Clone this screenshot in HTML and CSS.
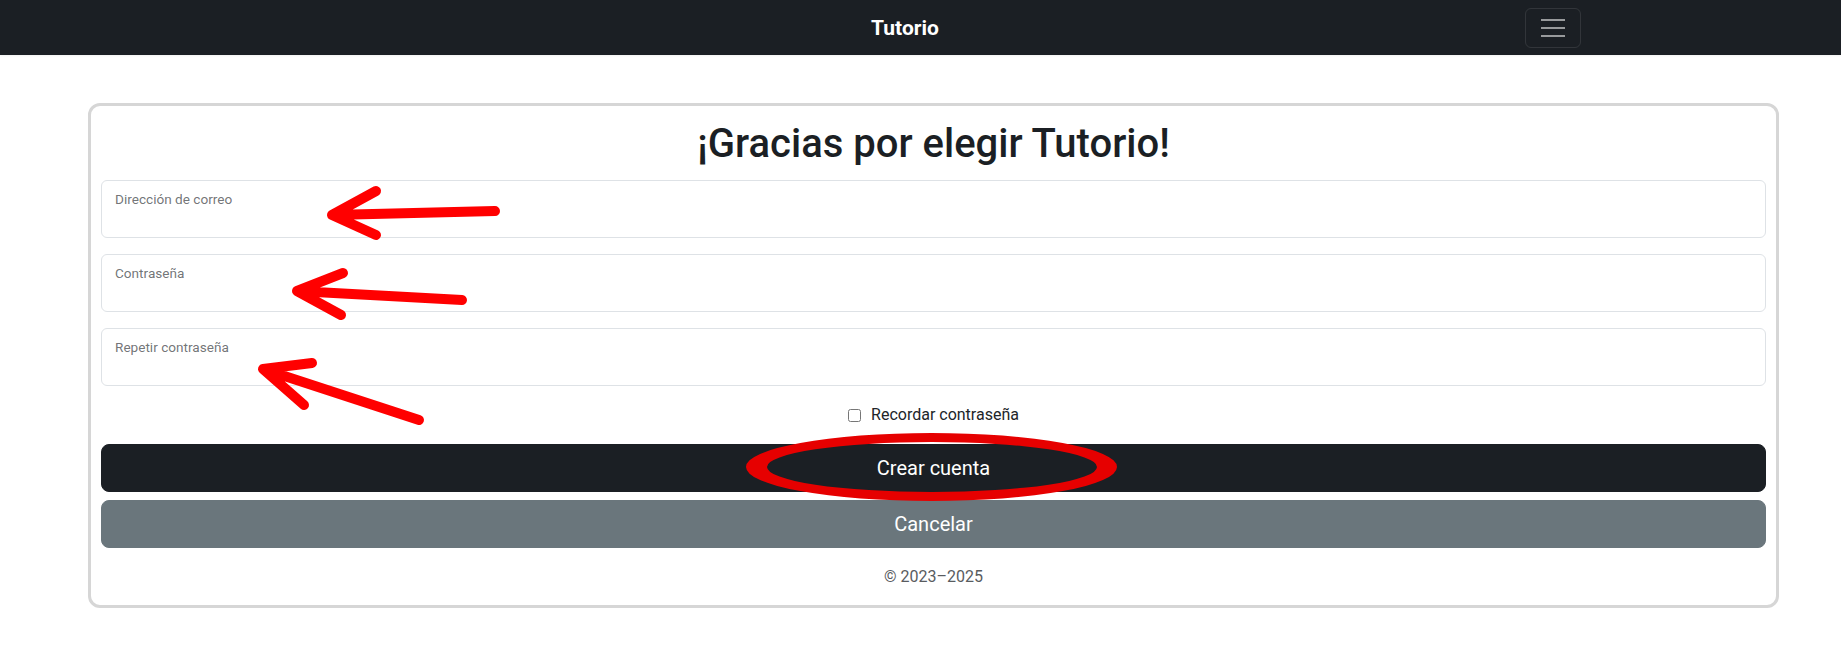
FILE: index.html
```html
<!DOCTYPE html>
<html lang="es">
<head>
<meta charset="utf-8">
<title>Tutorio</title>
<link rel="stylesheet" href="styles.css">
</head>
<body>
<nav class="navbar">
  <div class="nav-inner">
    <a class="brand" href="#">Tutorio</a>
    <button class="toggler" type="button" aria-label="Menú">
      <span class="bar"></span><span class="bar"></span><span class="bar"></span>
    </button>
  </div>
</nav>

<main class="card">
  <h1 class="title">¡Gracias por elegir Tutorio!</h1>
  <form class="form">
    <div class="field">
      <input class="input" type="email" id="email">
      <label class="label" for="email">Dirección de correo</label>
    </div>
    <div class="field">
      <input class="input" type="password" id="pass">
      <label class="label" for="pass">Contraseña</label>
    </div>
    <div class="field">
      <input class="input" type="password" id="pass2">
      <label class="label" for="pass2">Repetir contraseña</label>
    </div>
    <div class="check-row">
      <input class="check" type="checkbox" id="remember">
      <label for="remember">Recordar contraseña</label>
    </div>
    <button class="btn btn-dark" type="submit">Crear cuenta</button>
    <button class="btn btn-secondary" type="button">Cancelar</button>
  </form>
  <p class="footer">© 2023–2025</p>
</main>

<svg class="annotations" width="1841" height="663" viewBox="0 0 1841 663" aria-hidden="true">
  <g fill="none" stroke="#ff0000" stroke-width="10" stroke-linecap="round" stroke-linejoin="round">
    <path d="M495 211 L332 215 M376 191 L332 215 L376 235"/>
    <path d="M462 300 L297 291 M343 273 L297 291 L341 315"/>
    <path d="M419 420 L263 369 M312 363 L263 369 L304 405"/>
  </g>
  <path fill="#e60000" fill-rule="evenodd" d="M746 467 a185.5 34 0 1 0 371 0 a185.5 34 0 1 0 -371 0 Z M767 467 a165 25 0 1 0 330 0 a165 25 0 1 0 -330 0 Z"/>
</svg>
</body>
</html>
```
FILE: styles.css
```css
* { box-sizing: border-box; }

body {
  margin: 0;
  position: relative;
  font-family: Roboto, "Liberation Sans", sans-serif;
  font-size: 16px;
  line-height: 24px;
  color: #212529;
  background: #ffffff;
}

.navbar {
  height: 55px;
  background: #1b1f24;
  box-shadow: 0 1px 2px rgba(0, 0, 0, 0.06);
}

.nav-inner {
  margin-left: 285px;
  width: 1296px;
  height: 100%;
  display: flex;
  align-items: center;
}

.brand {
  flex: 1;
  text-align: center;
  color: #ffffff;
  font-weight: 700;
  font-size: 21px;
  text-decoration: none;
}

.toggler {
  width: 56px;
  height: 40px;
  padding: 0;
  background: transparent;
  border: 1px solid rgba(255, 255, 255, 0.1);
  border-radius: 6px;
  display: flex;
  flex-direction: column;
  align-items: center;
  justify-content: center;
  gap: 6px;
}

.bar {
  display: block;
  width: 24px;
  height: 2px;
  background: rgba(255, 255, 255, 0.55);
}

.card {
  margin: 48px 62px 0 88px;
  border: 3px solid #d6d6d6;
  border-radius: 12px;
  padding: 0 10px 16px;
}

.title {
  margin: 14px 0 12px;
  text-align: center;
  font-size: 40px;
  line-height: 48px;
  font-weight: 500;
  color: #1b1f24;
}

.form {
  display: flex;
  flex-direction: column;
}

.field {
  position: relative;
  height: 58px;
  margin-bottom: 16px;
}

.field:nth-child(3) { margin-bottom: 0; }

.input {
  display: block;
  width: 100%;
  height: 58px;
  border: 1px solid #dee2e6;
  border-radius: 6px;
  padding: 26px 12px 6px;
  font: inherit;
  background: #ffffff;
}

.label {
  position: absolute;
  top: 9px;
  left: 14px;
  font-size: 13.6px;
  line-height: 20px;
  color: rgba(33, 37, 41, 0.65);
}

.check-row {
  margin-top: 17px;
  height: 24px;
  display: flex;
  align-items: center;
  justify-content: center;
  gap: 10px;
  color: #212529;
}

.check {
  margin: 0;
  width: 13px;
  height: 13px;
}

.btn {
  display: block;
  width: 100%;
  height: 48px;
  border: 1px solid transparent;
  border-radius: 8px;
  font-family: inherit;
  font-size: 20px;
  color: #ffffff;
}

.btn-dark {
  margin-top: 17px;
  background: #1b1f24;
  border-color: #1b1f24;
}

.btn-secondary {
  margin-top: 8px;
  background: #6a767c;
  border-color: #6a767c;
}

.footer {
  margin: 17px 0 0;
  text-align: center;
  color: #595c5f;
}

.annotations {
  position: absolute;
  top: 0;
  left: 0;
  pointer-events: none;
}
```
